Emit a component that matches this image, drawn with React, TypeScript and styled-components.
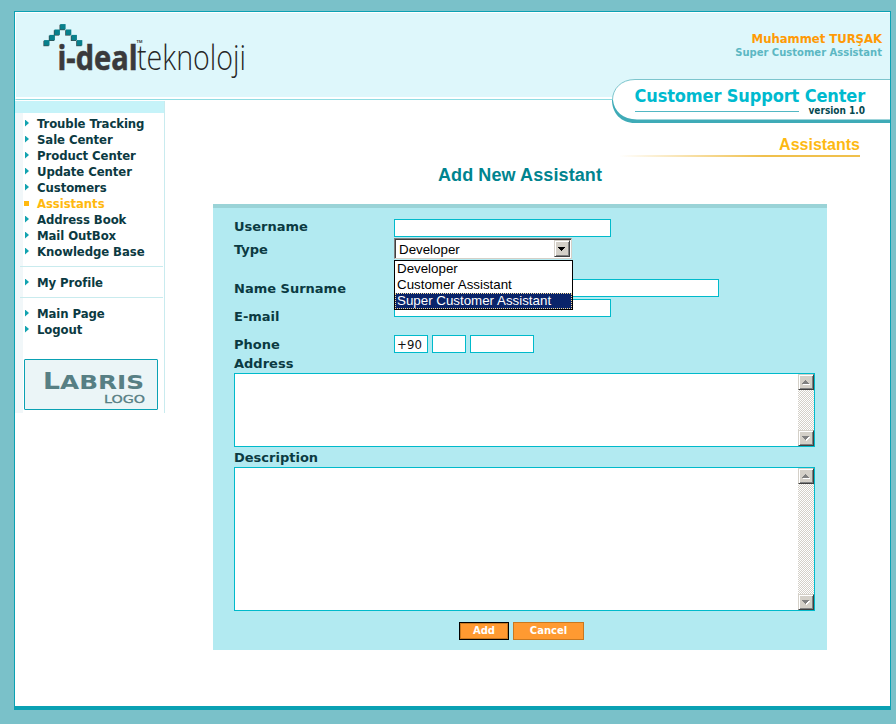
import React from "react";
import styled, { createGlobalStyle, css } from "styled-components";

const WIDE = '"DejaVu Sans", Verdana, sans-serif';
const NARROW = '"DejaVu Sans Condensed", "DejaVu Sans", Tahoma, sans-serif';
const ARIAL = '"Liberation Sans", Arial, sans-serif';

const GlobalStyle = createGlobalStyle`
  *, *::before, *::after { box-sizing: border-box; }
  body { margin: 0; background: #7ac1c9; overflow: hidden; }
`;

const Page = styled.div`
  height: 724px;
  padding: 11px 5px 14px 14px;
  background: #7ac1c9;
  font-family: ${WIDE};
`;

const Frame = styled.div`
  height: 699px;
  border: 1px solid #0aa1b3;
  border-bottom-width: 4px;
  background: #fff;
`;

const Header = styled.header`
  position: relative;
  display: flex;
  justify-content: space-between;
  height: 88px;
  border-top: 1px solid #fff;
  border-left: 1px solid #fff;
  border-bottom: 1px solid #8fdde3;
  background: linear-gradient(#def7fb 0 84px, #fff 84px);
`;

const Brand = styled.svg`
  display: block;
  margin: 7px 0 0 24px;
`;

const User = styled.div`
  display: flex;
  flex-direction: column;
  align-items: flex-end;
  padding: 17px 8px 0 0;
  font-weight: bold;
`;

const UserName = styled.div`
  font: bold 13px/17px ${NARROW};
  font-stretch: condensed;
  letter-spacing: -0.05px;
  color: #ff9a05;
`;

const UserRole = styled.div`
  font-size: 10px;
  line-height: 12px;
  color: #5cb7c3;
`;

const Banner = styled.div`
  position: absolute;
  top: 66px;
  right: 0;
  width: 278px;
  height: 45px;
`;

const BannerShape = styled.svg`
  display: block;
`;

const BannerText = styled.div`
  position: absolute;
  inset: 6px 25px auto 22px;
  display: flex;
  flex-direction: column;
  align-items: flex-end;
  white-space: nowrap;
`;

const BannerTitle = styled.div`
  font: bold 18px/22px ${NARROW};
  font-stretch: condensed;
  letter-spacing: -0.13px;
  color: #00bacf;
`;

const BannerVersion = styled.div`
  margin-top: -2px;
  font: bold 10px/12px ${NARROW};
  font-stretch: condensed;
  color: #064850;
`;

const Columns = styled.div`
  display: flex;
`;

const Sidebar = styled.aside`
  width: 150px;
  height: 312px;
  margin-top: 1px;
  border-right: 1px solid #c9ebef;
  background: linear-gradient(90deg, #f1f7f9 0 8px, #fff 8px);
`;

const SidebarCap = styled.div`
  height: 12px;
  margin-bottom: 3px;
  background: #c6f3f9;
`;

const MenuGroup = styled.ul`
  list-style: none;
  margin: 0 1px 0 5px;
  padding: 0 0 6px 4px;
  & + & {
    border-top: 1px solid #c9ebee;
    padding-top: 8px;
  }
`;

const MenuItem = styled.li<{ $active?: boolean }>`
  display: flex;
  align-items: center;
  height: 16px;
  font: bold 13px/16px ${NARROW};
  font-stretch: condensed;
  letter-spacing: -0.08px;
  color: ${(p) => (p.$active ? "#ffb90f" : "#0b3a42")};
  white-space: nowrap;
`;

const Marker = styled.span<{ $active?: boolean }>`
  flex: none;
  margin-bottom: 2px;
  ${(p) =>
    p.$active
      ? css`
          width: 5px;
          height: 5px;
          margin-right: 8px;
          background: #ffb90f;
        `
      : css`
          width: 4px;
          height: 7px;
          margin: 0 8px 2px 1px;
          background: #12a3b0;
          clip-path: polygon(0 0, 100% 50%, 0 100%);
        `}
`;

const PartnerLogo = styled.div`
  width: 134px;
  height: 51px;
  margin: 15px 0 0 9px;
  border: 1px solid #0aa1b3;
  border-radius: 1px;
  background: #ebf5f7;
`;

const Content = styled.main`
  flex: 1;
  padding: 35px 0 0 48px;
`;

const SectionTitle = styled.div`
  width: 240px;
  height: 22px;
  margin-left: 407px;
  text-align: right;
  font: bold 16px/20px ${ARIAL};
  color: #fdb913;
  border-bottom: 2px solid;
  border-image: linear-gradient(90deg, #fff, #f0c04c 60%) 1;
`;

const FormTitle = styled.h1`
  width: 614px;
  margin: 7px 0 18px;
  text-align: center;
  font: bold 18px/22px ${ARIAL};
  letter-spacing: 0.1px;
  color: #00848f;
`;

const Panel = styled.form`
  width: 614px;
  height: 446px;
  padding: 11px 12px 0 21px;
  border-top: 4px solid #9ad3d7;
  background: #b2eaf1;
`;

const Row = styled.div<{ $height?: number; $gap?: number }>`
  display: grid;
  grid-template-columns: 160px 1fr;
  height: ${(p) => p.$height ?? 18}px;
  margin-bottom: ${(p) => p.$gap ?? 0}px;
`;

const Label = styled.label<{ $drop?: number }>`
  font: bold 13px/16px ${WIDE};
  color: #0b3a42;
  padding-top: ${(p) => p.$drop ?? 0}px;
`;

const BlockLabel = styled(Label)<{ $height: number }>`
  display: block;
  height: ${(p) => p.$height}px;
`;

const Input = styled.input<{ $width: number }>`
  display: block;
  width: ${(p) => p.$width}px;
  height: 18px;
  margin: 0;
  padding: 1px 1px 0 2px;
  border: 1px solid #00bacb;
  border-radius: 0;
  outline: none;
  background: #fff;
  font: 13px ${NARROW};
  font-stretch: condensed;
  letter-spacing: 0.1px;
  color: #111;
`;

const PhoneFields = styled.div`
  display: flex;
  gap: 4px;
`;

const SelectWrap = styled.div`
  position: relative;
  width: 178px;
`;

const SelectBox = styled.div`
  display: flex;
  justify-content: space-between;
  height: 21px;
  border: 1px solid;
  border-color: #808080 #d4d0c8 #d4d0c8 #808080;
  box-shadow: inset 1px 1px 0 #404040;
  background: #fff;
  padding: 1px 1px 1px 4px;
  font: 13.33px/19px ${ARIAL};
  color: #000;
`;

const Bevel = styled.span`
  display: block;
  flex: none;
  width: 16px;
  height: 16px;
  border: 1px solid;
  border-color: #d4d0c8 #404040 #404040 #d4d0c8;
  box-shadow: inset 1px 1px 0 #fff, inset -1px -1px 0 #808080;
  background: #d4d0c8;
  svg {
    display: block;
  }
`;

const SelectBevel = styled(Bevel)`
  height: 17px;
`;

const OptionList = styled.ul`
  position: absolute;
  top: 22px;
  left: 0;
  z-index: 2;
  width: 179px;
  margin: 0;
  padding: 0;
  list-style: none;
  border: 1px solid #000;
  background: #fff;
`;

const Option = styled.li<{ $selected?: boolean }>`
  height: 16px;
  padding-left: 1px;
  font: 13.33px/14px ${ARIAL};
  border: 1px dotted ${(p) => (p.$selected ? "#f5db95" : "transparent")};
  background: ${(p) => (p.$selected ? "#0a246a" : "#fff")};
  background-clip: border-box;
  color: ${(p) => (p.$selected ? "#fff" : "#000")};
`;

const Area = styled.div<{ $height: number }>`
  display: flex;
  width: 581px;
  height: ${(p) => p.$height}px;
  border: 1px solid #00bacb;
  background: #fff;
`;

const AreaText = styled.textarea`
  flex: 1;
  margin: 0;
  padding: 2px;
  border: 0;
  outline: none;
  resize: none;
  overflow: hidden;
  background: #fff;
  font: 13px ${NARROW};
`;

const ScrollTrack = styled.div`
  display: flex;
  flex-direction: column;
  justify-content: space-between;
  width: 16px;
  background: repeating-conic-gradient(#d4d0c8 0 25%, #fff 0 50%) 0 0 / 2px 2px;
`;

const Actions = styled.div`
  display: flex;
  gap: 4px;
  margin: 11px 0 0 225px;
`;

const ActionButton = styled.button<{ $width: number; $primary?: boolean }>`
  width: ${(p) => p.$width}px;
  height: 18px;
  padding: 0;
  border: 1px solid ${(p) => (p.$primary ? "#000" : "#c87820")};
  box-shadow: ${(p) => (p.$primary ? "inset 0 0 0 1px #c87820" : "none")};
  border-radius: 0;
  background: #ff9a31;
  color: #fff;
  font: bold 10px/16px ${WIDE};
`;

const ROOF = [
  [62.7, 27],
  [57, 32.4],
  [68.4, 32.4],
  [52, 37.8],
  [74, 37.8],
  [46.6, 43],
  [79.4, 43],
];

function BrandLogo() {
  return (
    <Brand width="210" height="60" viewBox="40 20 210 60" aria-label="i-deal teknoloji">
      {ROOF.map(([x, y]) => (
        <g key={x}>
          <rect x={x - 3.2} y={y - 2.2} width="5.4" height="5.4" fill="#3b4a4c" />
          <rect x={x - 2.5} y={y - 2.9} width="5.4" height="5.4" fill="#07808c" />
        </g>
      ))}
      <text
        x="57.5"
        y="69.5"
        textLength="80"
        lengthAdjust="spacingAndGlyphs"
        fontFamily="Open Sans, sans-serif"
        fontWeight="700"
        fontSize="34"
        fill="#3a3a3c"
        stroke="#3a3a3c"
        strokeWidth="0.6"
      >
        i-deal
      </text>
      <text
        x="137"
        y="69.5"
        textLength="109"
        lengthAdjust="spacingAndGlyphs"
        fontFamily="Open Sans, sans-serif"
        fontWeight="300"
        fontSize="35"
        fill="#262626"
      >
        teknoloji
      </text>
      <text x="136.5" y="43" fontFamily="Open Sans, sans-serif" fontWeight="700" fontSize="4" fill="#444">
        TM
      </text>
    </Brand>
  );
}

function ArrowGlyph({ up }: { up?: boolean }) {
  const d = up ? "M4 9h7v-1h-1v-1h-1v-1h-1v-1h-1v1h-1v1h-1v1h-1z" : "M4 5h7v1h-1v1h-1v1h-1v1h-1v-1h-1v-1h-1v-1h-1z";
  return (
    <svg width="14" height="14" shapeRendering="crispEdges">
      <path d={d} fill="#fff" transform="translate(0 1)" />
      <path d={d} fill="#808080" transform="translate(-1 0)" />
    </svg>
  );
}

function TextArea({ height, id }: { height: number; id: string }) {
  return (
    <Area $height={height}>
      <AreaText id={id} />
      <ScrollTrack>
        <Bevel>
          <ArrowGlyph up />
        </Bevel>
        <Bevel>
          <ArrowGlyph />
        </Bevel>
      </ScrollTrack>
    </Area>
  );
}

const MENU = [
  [
    "Trouble Tracking",
    "Sale Center",
    "Product Center",
    "Update Center",
    "Customers",
    "Assistants",
    "Address Book",
    "Mail OutBox",
    "Knowledge Base",
  ],
  ["My Profile"],
  ["Main Page", "Logout"],
];

const TYPES = ["Developer", "Customer Assistant", "Super Customer Assistant"];

export default function App() {
  return (
    <>
      <GlobalStyle />
      <Page>
        <Frame>
          <Header>
            <BrandLogo />
            <User>
              <UserName>Muhammet TURŞAK</UserName>
              <UserRole>Super Customer Assistant</UserRole>
            </User>
            <Banner>
              <BannerShape width="278" height="45">
                <path d="M278 .5H23C9 .5 .5 10 .5 21S9 43 23 43H278Z" fill="#fff" />
                <path d="M278 .5H23C9 .5 .5 10 .5 21" fill="none" stroke="#7cc5cd" />
                <path d="M0 21C0 34 9 44 23 44H278V40.5H25C11 40.5 2 32 1 21Z" fill="#3fabb7" />
                <path d="M23 32.5H187" stroke="#52b7c3" />
              </BannerShape>
              <BannerText>
                <BannerTitle>Customer Support Center</BannerTitle>
                <BannerVersion>version 1.0</BannerVersion>
              </BannerText>
            </Banner>
          </Header>
          <Columns>
            <Sidebar>
              <SidebarCap />
              {MENU.map((group) => (
                <MenuGroup key={group[0]}>
                  {group.map((item) => (
                    <MenuItem key={item} $active={item === "Assistants"}>
                      <Marker $active={item === "Assistants"} />
                      {item}
                    </MenuItem>
                  ))}
                </MenuGroup>
              ))}
              <PartnerLogo>
                <svg width="132" height="49" fontFamily="DejaVu Sans, sans-serif" fill="#577f84">
                  <text x="18" y="29" fontSize="23" fontWeight="bold" textLength="17" lengthAdjust="spacingAndGlyphs">
                    L
                  </text>
                  <text x="35" y="29" fontSize="19" fontWeight="bold" textLength="84" lengthAdjust="spacingAndGlyphs">
                    ABRIS
                  </text>
                  <text x="79" y="43" fontSize="11" textLength="41" lengthAdjust="spacingAndGlyphs" stroke="#577f84" strokeWidth=".3">
                    LOGO
                  </text>
                </svg>
              </PartnerLogo>
            </Sidebar>
            <Content>
              <SectionTitle>Assistants</SectionTitle>
              <FormTitle>Add New Assistant</FormTitle>
              <Panel>
                <Row $gap={1}>
                  <Label htmlFor="username">Username</Label>
                  <Input id="username" $width={217} />
                </Row>
                <Row $height={21} $gap={20}>
                  <Label $drop={4}>Type</Label>
                  <SelectWrap>
                    <SelectBox>
                      Developer
                      <SelectBevel>
                        <svg width="14" height="15" shapeRendering="crispEdges">
                          <path d="M3 6h7v1h-1v1h-1v1h-1v1h-1v-1h-1v-1h-1v-1h-1z" fill="#000" />
                        </svg>
                      </SelectBevel>
                    </SelectBox>
                    <OptionList>
                      {TYPES.map((type, i) => (
                        <Option key={type} $selected={i === 2}>
                          {type}
                        </Option>
                      ))}
                    </OptionList>
                  </SelectWrap>
                </Row>
                <Row $gap={2}>
                  <Label $drop={2} htmlFor="fullname">
                    Name Surname
                  </Label>
                  <Input id="fullname" $width={325} />
                </Row>
                <Row $height={28} $gap={8}>
                  <Label $drop={10} htmlFor="email">
                    E-mail
                  </Label>
                  <Input id="email" $width={217} />
                </Row>
                <Row $gap={3}>
                  <Label $drop={2}>Phone</Label>
                  <PhoneFields>
                    <Input $width={34} defaultValue="+90" />
                    <Input $width={34} />
                    <Input $width={64} />
                  </PhoneFields>
                </Row>
                <BlockLabel $height={17} htmlFor="address">
                  Address
                </BlockLabel>
                <TextArea id="address" height={74} />
                <BlockLabel $height={20} $drop={3} htmlFor="description">
                  Description
                </BlockLabel>
                <TextArea id="description" height={144} />
                <Actions>
                  <ActionButton type="button" $width={50} $primary>
                    Add
                  </ActionButton>
                  <ActionButton type="button" $width={71}>
                    Cancel
                  </ActionButton>
                </Actions>
              </Panel>
            </Content>
          </Columns>
        </Frame>
      </Page>
    </>
  );
}
